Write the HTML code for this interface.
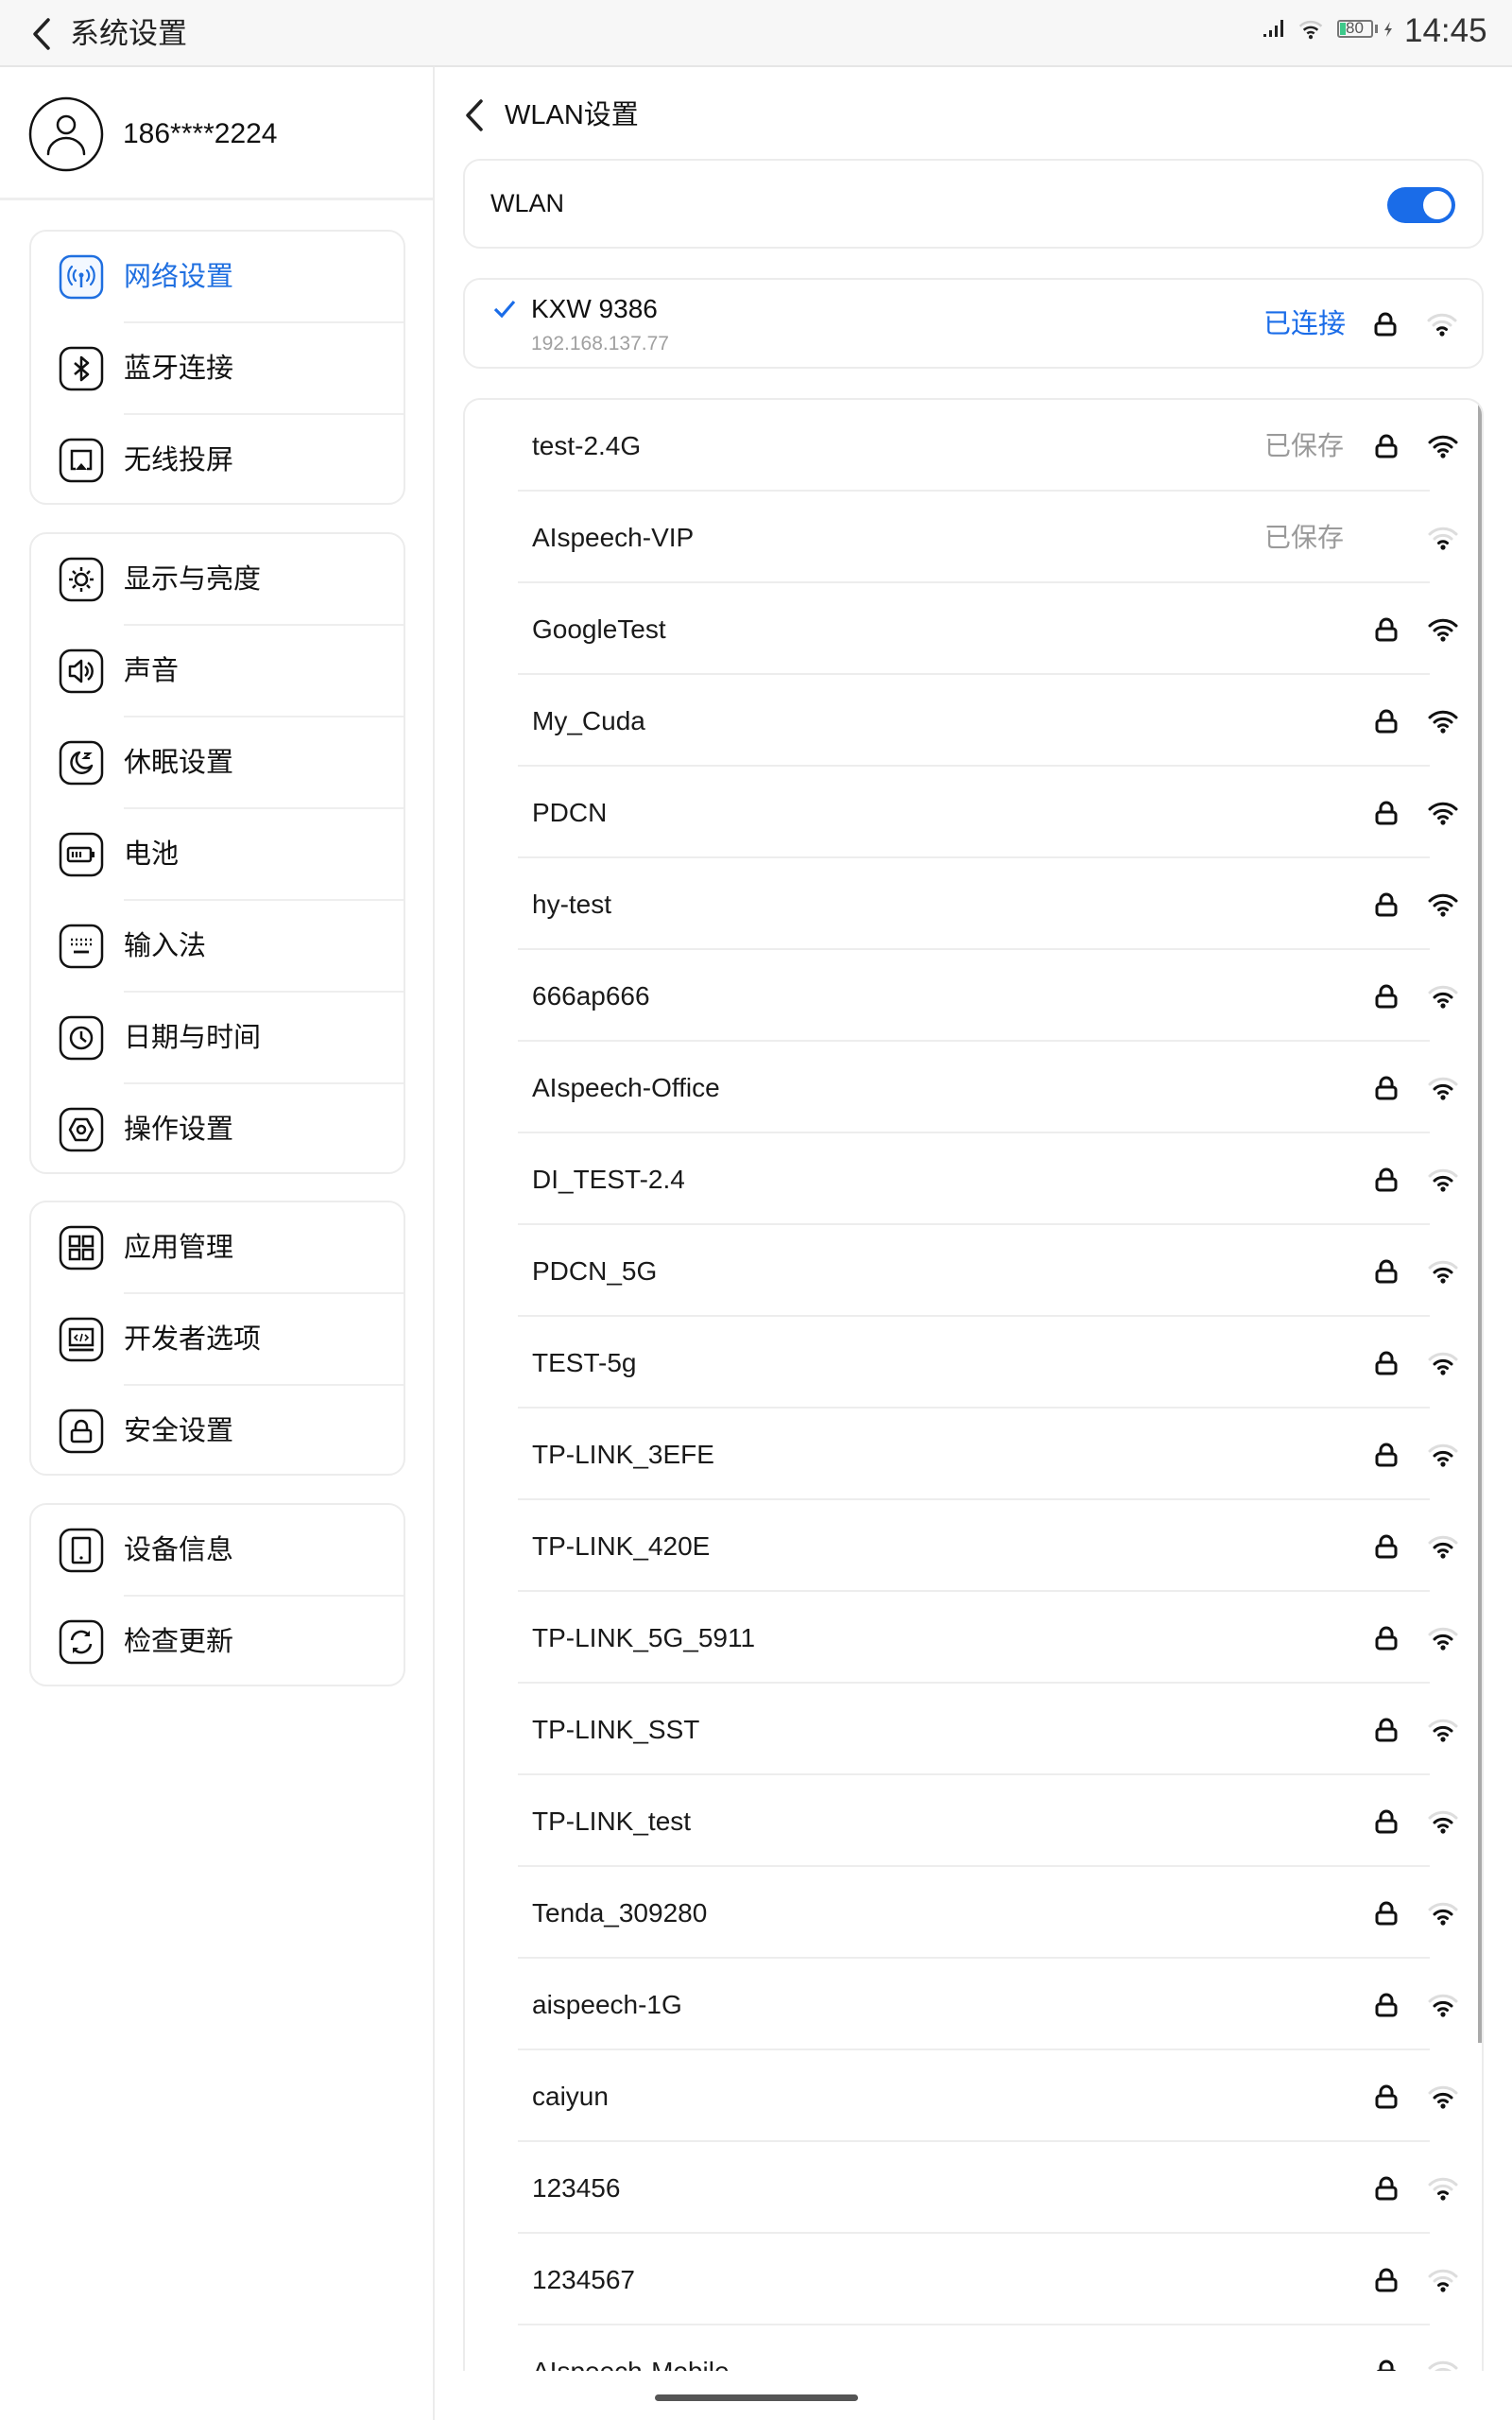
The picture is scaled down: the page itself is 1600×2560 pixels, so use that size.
<!DOCTYPE html>
<html style="overflow:hidden;width:1600px;height:2560px"><head><meta charset="utf-8">
<style>
*{margin:0;padding:0;box-sizing:border-box}
html,body{overflow:hidden}
body{width:1600px;height:2560px;background:#fff;position:relative;overflow:hidden;font-family:"Liberation Sans","Noto Sans CJK SC",sans-serif;color:#111}
.abs{position:absolute}
.status{left:0;top:0;width:1600px;height:71px;background:#f7f7f7;border-bottom:2px solid #e6e6e6}
.vdiv{left:458px;top:71px;width:2px;height:2489px;background:#ececec}
.card{position:absolute;background:#fff;border:2px solid #ececec;border-radius:18px;overflow:hidden}
.mrow{position:absolute;left:0;width:100%;height:97px}
.mrow .ic{position:absolute;left:29px;top:24px;width:48px;height:48px}
.mrow .t{position:absolute;left:98px;top:0;line-height:97px;font-size:29px;color:#111}
.mrow .sep{position:absolute;left:98px;right:0;bottom:0;height:2px;background:#eeeeee}
.wrow{position:absolute;left:0;width:100%;height:97px}
.wrow .n{position:absolute;left:71px;line-height:97px;font-size:28px;color:#1a1a1a}
.wrow .s{position:absolute;left:846px;line-height:97px;font-size:28px;color:#9a9a9a}
.wrow .lk{position:absolute;left:962px;top:36px;width:26px;height:26px}
.wrow .wf{position:absolute;left:1019px;top:36px;width:32px;height:26px}
.wrow .sep{position:absolute;left:56px;width:965px;bottom:0;height:2px;background:#ededed}
</style></head><body>
<svg width="0" height="0" style="position:absolute">
<defs>
<symbol id="lock" viewBox="0 0 26 26"><path d="M7 12V8a6 6 0 0 1 12 0v4" fill="none" stroke="#111" stroke-width="3"/><rect x="3" y="12" width="20" height="12" rx="3" fill="none" stroke="#111" stroke-width="3"/></symbol>
<symbol id="w4" viewBox="0 0 32 26"><path d="M2 9a20 20 0 0 1 28 0" fill="none" stroke="#111" stroke-width="3" stroke-linecap="round"/><path d="M7 14a13 13 0 0 1 18 0" fill="none" stroke="#111" stroke-width="3" stroke-linecap="round"/><path d="M11.5 18.5a6.5 6.5 0 0 1 9 0" fill="none" stroke="#111" stroke-width="3" stroke-linecap="round"/><circle cx="16" cy="23" r="2.6" fill="#111"/></symbol>
<symbol id="w3" viewBox="0 0 32 26"><path d="M2 9a20 20 0 0 1 28 0" fill="none" stroke="#ddd" stroke-width="3" stroke-linecap="round"/><path d="M7 14a13 13 0 0 1 18 0" fill="none" stroke="#111" stroke-width="3" stroke-linecap="round"/><path d="M11.5 18.5a6.5 6.5 0 0 1 9 0" fill="none" stroke="#111" stroke-width="3" stroke-linecap="round"/><circle cx="16" cy="23" r="2.6" fill="#111"/></symbol>
<symbol id="w2" viewBox="0 0 32 26"><path d="M2 9a20 20 0 0 1 28 0" fill="none" stroke="#ddd" stroke-width="3" stroke-linecap="round"/><path d="M7 14a13 13 0 0 1 18 0" fill="none" stroke="#ddd" stroke-width="3" stroke-linecap="round"/><path d="M11.5 18.5a6.5 6.5 0 0 1 9 0" fill="none" stroke="#111" stroke-width="3" stroke-linecap="round"/><circle cx="16" cy="23" r="2.6" fill="#111"/></symbol>
</defs></svg>

<div class="abs status"></div>
<svg class="abs" style="left:32px;top:18px" width="24" height="36" viewBox="0 0 24 36"><path d="M19 3L5 18l14 15" fill="none" stroke="#222" stroke-width="3.5" stroke-linecap="round" stroke-linejoin="round"/></svg>
<div class="abs" style="left:74px;top:14px;font-size:31px;line-height:44px;color:#222">系统设置</div>
<svg class="abs" style="left:1336px;top:20px" width="26" height="20" viewBox="0 0 26 20"><rect x="1" y="16" width="3" height="3" fill="#222"/><rect x="7" y="12" width="3" height="7" fill="#222"/><rect x="13" y="7" width="3" height="12" fill="#222"/><rect x="19" y="1" width="3" height="18" fill="#222"/></svg>
<svg class="abs" style="left:1374px;top:20px" width="26" height="22" viewBox="0 0 32 26"><path d="M2 9a20 20 0 0 1 28 0" fill="none" stroke="#ccc" stroke-width="3"/><path d="M7 14a13 13 0 0 1 18 0" fill="none" stroke="#222" stroke-width="3"/><path d="M11.5 18.5a6.5 6.5 0 0 1 9 0" fill="none" stroke="#222" stroke-width="3"/><circle cx="16" cy="23" r="2.6" fill="#222"/></svg>
<div class="abs" style="left:1415px;top:21px;width:38px;height:19px;border:2px solid #777;border-radius:3px"></div>
<div class="abs" style="left:1418px;top:24px;width:6px;height:13px;background:#3dc98a"></div>
<div class="abs" style="left:1424px;top:19px;font-size:17px;line-height:22px;color:#555">80</div>
<div class="abs" style="left:1455px;top:26px;width:3px;height:9px;background:#777"></div>
<svg class="abs" style="left:1463px;top:22px" width="12" height="18" viewBox="0 0 12 18"><path d="M8 1L2 10h4l-2 7 6-9H6z" fill="#555"/></svg>
<div class="abs" style="left:1486px;top:12px;font-size:35px;line-height:42px;color:#333">14:45</div>

<div class="abs vdiv"></div>

<svg class="abs" style="left:30px;top:102px" width="80" height="80" viewBox="0 0 80 80"><circle cx="40" cy="40" r="38" fill="none" stroke="#111" stroke-width="2.5"/><circle cx="40" cy="30" r="9" fill="none" stroke="#111" stroke-width="2.5"/><path d="M21 61a19 17 0 0 1 38 0" fill="none" stroke="#111" stroke-width="2.5" stroke-linecap="round"/></svg>
<div class="abs" style="left:130px;top:120px;font-size:30px;line-height:44px;color:#111">186****2224</div>
<div class="abs" style="left:0;top:209px;width:458px;height:3px;background:#eeeeee"></div>

<div class="card" style="left:31px;top:243px;width:398px;height:291px">
 <div class="mrow" style="top:0"><svg class="ic" viewBox="0 0 48 48"><rect x="2" y="2" width="44" height="44" rx="11" fill="#f3f8ff" stroke="#1f6fe0" stroke-width="2.5"/><circle cx="24" cy="22" r="2.5" fill="#1f6fe0"/><path d="M24 24v11" stroke="#1f6fe0" stroke-width="2.5"/><path d="M18 17a8 8 0 0 0 0 11M30 17a8 8 0 0 1 0 11M14 13a14 14 0 0 0 0 19M34 13a14 14 0 0 1 0 19" fill="none" stroke="#1f6fe0" stroke-width="2.2" stroke-linecap="round"/></svg><div class="t" style="color:#1f6fe0">网络设置</div><div class="sep"></div></div>
 <div class="mrow" style="top:97px"><svg class="ic" viewBox="0 0 48 48"><rect x="2" y="2" width="44" height="44" rx="11" fill="none" stroke="#111" stroke-width="2.5"/><path d="M17 18l14 12-7 6V12l7 6-14 12" fill="none" stroke="#111" stroke-width="2.5" stroke-linejoin="round"/></svg><div class="t">蓝牙连接</div><div class="sep"></div></div>
 <div class="mrow" style="top:194px"><svg class="ic" viewBox="0 0 48 48"><rect x="2" y="2" width="44" height="44" rx="11" fill="none" stroke="#111" stroke-width="2.5"/><path d="M18 33h-4V14h20v19h-4" fill="none" stroke="#111" stroke-width="2.5"/><path d="M24 27l6 7H18z" fill="#111"/></svg><div class="t">无线投屏</div></div>
</div>

<div class="card" style="left:31px;top:563px;width:398px;height:679px">
 <div class="mrow" style="top:0"><svg class="ic" viewBox="0 0 48 48"><rect x="2" y="2" width="44" height="44" rx="11" fill="none" stroke="#111" stroke-width="2.5"/><circle cx="24" cy="24" r="6" fill="none" stroke="#111" stroke-width="2.5"/><path d="M24 11v4M24 33v4M11 24h4M33 24h4M15 15l3 3M30 30l3 3M33 15l-3 3M15 33l3-3" stroke="#111" stroke-width="2.5"/></svg><div class="t">显示与亮度</div><div class="sep"></div></div>
 <div class="mrow" style="top:97px"><svg class="ic" viewBox="0 0 48 48"><rect x="2" y="2" width="44" height="44" rx="11" fill="none" stroke="#111" stroke-width="2.5"/><path d="M12 19h5l7-6v22l-7-6h-5z" fill="none" stroke="#111" stroke-width="2.5" stroke-linejoin="round"/><path d="M28 19a6 6 0 0 1 0 10M31 15a11 11 0 0 1 0 18" fill="none" stroke="#111" stroke-width="2.5"/></svg><div class="t">声音</div><div class="sep"></div></div>
 <div class="mrow" style="top:194px"><svg class="ic" viewBox="0 0 48 48"><rect x="2" y="2" width="44" height="44" rx="11" fill="none" stroke="#111" stroke-width="2.5"/><path d="M22 13a11 11 0 1 0 13 14a9 9 0 0 1-13-14z" fill="none" stroke="#111" stroke-width="2.5" stroke-linejoin="round"/><path d="M27 14h6l-6 5h6" fill="none" stroke="#111" stroke-width="2"/></svg><div class="t">休眠设置</div><div class="sep"></div></div>
 <div class="mrow" style="top:291px"><svg class="ic" viewBox="0 0 48 48"><rect x="2" y="2" width="44" height="44" rx="11" fill="none" stroke="#111" stroke-width="2.5"/><rect x="10" y="17" width="24" height="14" rx="2" fill="none" stroke="#111" stroke-width="2.5"/><path d="M15 21v6M19 21v6M23 21v6" stroke="#111" stroke-width="2.2"/><rect x="35" y="21" width="3" height="6" fill="#111"/></svg><div class="t">电池</div><div class="sep"></div></div>
 <div class="mrow" style="top:388px"><svg class="ic" viewBox="0 0 48 48"><rect x="2" y="2" width="44" height="44" rx="11" fill="none" stroke="#111" stroke-width="2.5"/><path d="M13 17h2M18 17h2M23 17h2M28 17h2M33 17h2M13 22h2M18 22h2M23 22h2M28 22h2M33 22h2" stroke="#111" stroke-width="2.5"/><path d="M16 30h16" stroke="#111" stroke-width="2.8"/></svg><div class="t">输入法</div><div class="sep"></div></div>
 <div class="mrow" style="top:485px"><svg class="ic" viewBox="0 0 48 48"><rect x="2" y="2" width="44" height="44" rx="11" fill="none" stroke="#111" stroke-width="2.5"/><circle cx="24" cy="24" r="11" fill="none" stroke="#111" stroke-width="2.5"/><path d="M24 17v7l5 4" fill="none" stroke="#111" stroke-width="2.5"/></svg><div class="t">日期与时间</div><div class="sep"></div></div>
 <div class="mrow" style="top:582px"><svg class="ic" viewBox="0 0 48 48"><rect x="2" y="2" width="44" height="44" rx="11" fill="none" stroke="#111" stroke-width="2.5"/><path d="M18 13h12l6 11-6 11H18l-6-11z" fill="none" stroke="#111" stroke-width="2.5" stroke-linejoin="round"/><circle cx="24" cy="24" r="4" fill="none" stroke="#111" stroke-width="2.5"/></svg><div class="t">操作设置</div></div>
</div>

<div class="card" style="left:31px;top:1270px;width:398px;height:291px">
 <div class="mrow" style="top:0"><svg class="ic" viewBox="0 0 48 48"><rect x="2" y="2" width="44" height="44" rx="11" fill="none" stroke="#111" stroke-width="2.5"/><rect x="12" y="12" width="10" height="10" fill="none" stroke="#111" stroke-width="2.5"/><rect x="26" y="12" width="10" height="10" fill="none" stroke="#111" stroke-width="2.5"/><rect x="12" y="26" width="10" height="10" fill="none" stroke="#111" stroke-width="2.5"/><rect x="26" y="26" width="10" height="10" fill="none" stroke="#111" stroke-width="2.5"/></svg><div class="t">应用管理</div><div class="sep"></div></div>
 <div class="mrow" style="top:97px"><svg class="ic" viewBox="0 0 48 48"><rect x="2" y="2" width="44" height="44" rx="11" fill="none" stroke="#111" stroke-width="2.5"/><rect x="12" y="13" width="24" height="17" fill="none" stroke="#111" stroke-width="2.5"/><path d="M11 35h26" stroke="#111" stroke-width="2.8"/><path d="M20 19l-3 3 3 3M28 19l3 3-3 3M25 18l-2 8" fill="none" stroke="#111" stroke-width="1.6"/></svg><div class="t">开发者选项</div><div class="sep"></div></div>
 <div class="mrow" style="top:194px"><svg class="ic" viewBox="0 0 48 48"><rect x="2" y="2" width="44" height="44" rx="11" fill="none" stroke="#111" stroke-width="2.5"/><path d="M18 23v-4a6 6 0 0 1 12 0v4" fill="none" stroke="#111" stroke-width="2.5"/><rect x="14" y="23" width="20" height="12" rx="2" fill="none" stroke="#111" stroke-width="2.5"/></svg><div class="t">安全设置</div></div>
</div>

<div class="card" style="left:31px;top:1590px;width:398px;height:194px">
 <div class="mrow" style="top:0"><svg class="ic" viewBox="0 0 48 48"><rect x="2" y="2" width="44" height="44" rx="11" fill="none" stroke="#111" stroke-width="2.5"/><rect x="15" y="11" width="18" height="26" rx="1" fill="none" stroke="#111" stroke-width="2.5"/><circle cx="24" cy="32" r="1.6" fill="#111"/></svg><div class="t">设备信息</div><div class="sep"></div></div>
 <div class="mrow" style="top:97px"><svg class="ic" viewBox="0 0 48 48"><rect x="2" y="2" width="44" height="44" rx="11" fill="none" stroke="#111" stroke-width="2.5"/><path d="M14 22a10 10 0 0 1 18-5M34 26a10 10 0 0 1-18 5" fill="none" stroke="#111" stroke-width="2.5"/><path d="M33 12v6h-6z M15 36v-6h6z" fill="#111"/></svg><div class="t">检查更新</div></div>
</div>

<svg class="abs" style="left:490px;top:104px" width="24" height="36" viewBox="0 0 24 36"><path d="M19 3L5 18l14 15" fill="none" stroke="#222" stroke-width="3.5" stroke-linecap="round" stroke-linejoin="round"/></svg>
<div class="abs" style="left:534px;top:100px;font-size:29px;line-height:44px;color:#111">WLAN设置</div>

<div class="card" style="left:490px;top:168px;width:1080px;height:95px">
 <div class="abs" style="left:27px;top:0;line-height:91px;font-size:27px">WLAN</div>
 <div class="abs" style="left:976px;top:28px;width:72px;height:38px;border-radius:19px;background:#1a6ce8"></div>
 <div class="abs" style="left:1014px;top:32px;width:30px;height:30px;border-radius:50%;background:#fff"></div>
</div>

<div class="card" style="left:490px;top:294px;width:1080px;height:96px">
 <svg class="abs" style="left:29px;top:20px" width="26" height="22" viewBox="0 0 26 22"><path d="M3 11l7 7L23 3" fill="none" stroke="#1a6ce8" stroke-width="3.2"/></svg>
 <div class="abs" style="left:70px;top:14px;font-size:28px;line-height:34px">KXW 9386</div>
 <div class="abs" style="left:70px;top:55px;font-size:21px;line-height:26px;color:#a0a0a0">192.168.137.77</div>
 <div class="abs" style="left:845px;top:28px;font-size:29px;line-height:38px;color:#1a6ce8">已连接</div>
 <svg class="abs" style="left:961px;top:34px" width="26" height="26"><use href="#lock"/></svg>
 <svg class="abs" style="left:1018px;top:34px" width="32" height="26"><use href="#w2"/></svg>
</div>

<div class="card" style="left:490px;top:421px;width:1080px;height:2087px;border-bottom:none;border-radius:18px 18px 0 0">
 <div class="abs" style="left:1072px;top:0;width:6px;height:1738px;background:#aaaaaa"></div>
 <div class="wrow" style="top:0"><div class="n">test-2.4G</div><div class="s">已保存</div><svg class="lk"><use href="#lock"/></svg><svg class="wf"><use href="#w4"/></svg><div class="sep"></div></div>
 <div class="wrow" style="top:97px"><div class="n">AIspeech-VIP</div><div class="s">已保存</div><svg class="wf"><use href="#w2"/></svg><div class="sep"></div></div>
 <div class="wrow" style="top:194px"><div class="n">GoogleTest</div><svg class="lk"><use href="#lock"/></svg><svg class="wf"><use href="#w4"/></svg><div class="sep"></div></div>
 <div class="wrow" style="top:291px"><div class="n">My_Cuda</div><svg class="lk"><use href="#lock"/></svg><svg class="wf"><use href="#w4"/></svg><div class="sep"></div></div>
 <div class="wrow" style="top:388px"><div class="n">PDCN</div><svg class="lk"><use href="#lock"/></svg><svg class="wf"><use href="#w4"/></svg><div class="sep"></div></div>
 <div class="wrow" style="top:485px"><div class="n">hy-test</div><svg class="lk"><use href="#lock"/></svg><svg class="wf"><use href="#w4"/></svg><div class="sep"></div></div>
 <div class="wrow" style="top:582px"><div class="n">666ap666</div><svg class="lk"><use href="#lock"/></svg><svg class="wf"><use href="#w3"/></svg><div class="sep"></div></div>
 <div class="wrow" style="top:679px"><div class="n">AIspeech-Office</div><svg class="lk"><use href="#lock"/></svg><svg class="wf"><use href="#w3"/></svg><div class="sep"></div></div>
 <div class="wrow" style="top:776px"><div class="n">DI_TEST-2.4</div><svg class="lk"><use href="#lock"/></svg><svg class="wf"><use href="#w3"/></svg><div class="sep"></div></div>
 <div class="wrow" style="top:873px"><div class="n">PDCN_5G</div><svg class="lk"><use href="#lock"/></svg><svg class="wf"><use href="#w3"/></svg><div class="sep"></div></div>
 <div class="wrow" style="top:970px"><div class="n">TEST-5g</div><svg class="lk"><use href="#lock"/></svg><svg class="wf"><use href="#w3"/></svg><div class="sep"></div></div>
 <div class="wrow" style="top:1067px"><div class="n">TP-LINK_3EFE</div><svg class="lk"><use href="#lock"/></svg><svg class="wf"><use href="#w3"/></svg><div class="sep"></div></div>
 <div class="wrow" style="top:1164px"><div class="n">TP-LINK_420E</div><svg class="lk"><use href="#lock"/></svg><svg class="wf"><use href="#w3"/></svg><div class="sep"></div></div>
 <div class="wrow" style="top:1261px"><div class="n">TP-LINK_5G_5911</div><svg class="lk"><use href="#lock"/></svg><svg class="wf"><use href="#w3"/></svg><div class="sep"></div></div>
 <div class="wrow" style="top:1358px"><div class="n">TP-LINK_SST</div><svg class="lk"><use href="#lock"/></svg><svg class="wf"><use href="#w3"/></svg><div class="sep"></div></div>
 <div class="wrow" style="top:1455px"><div class="n">TP-LINK_test</div><svg class="lk"><use href="#lock"/></svg><svg class="wf"><use href="#w3"/></svg><div class="sep"></div></div>
 <div class="wrow" style="top:1552px"><div class="n">Tenda_309280</div><svg class="lk"><use href="#lock"/></svg><svg class="wf"><use href="#w3"/></svg><div class="sep"></div></div>
 <div class="wrow" style="top:1649px"><div class="n">aispeech-1G</div><svg class="lk"><use href="#lock"/></svg><svg class="wf"><use href="#w3"/></svg><div class="sep"></div></div>
 <div class="wrow" style="top:1746px"><div class="n">caiyun</div><svg class="lk"><use href="#lock"/></svg><svg class="wf"><use href="#w3"/></svg><div class="sep"></div></div>
 <div class="wrow" style="top:1843px"><div class="n">123456</div><svg class="lk"><use href="#lock"/></svg><svg class="wf"><use href="#w2"/></svg><div class="sep"></div></div>
 <div class="wrow" style="top:1940px"><div class="n">1234567</div><svg class="lk"><use href="#lock"/></svg><svg class="wf"><use href="#w2"/></svg><div class="sep"></div></div>
 <div class="wrow" style="top:2037px"><div class="n">AIspeech-Mobile</div><svg class="lk"><use href="#lock"/></svg><svg class="wf"><use href="#w2"/></svg></div>
</div>

<div class="abs" style="left:693px;top:2533px;width:215px;height:7px;border-radius:4px;background:#555"></div>
</body></html>
